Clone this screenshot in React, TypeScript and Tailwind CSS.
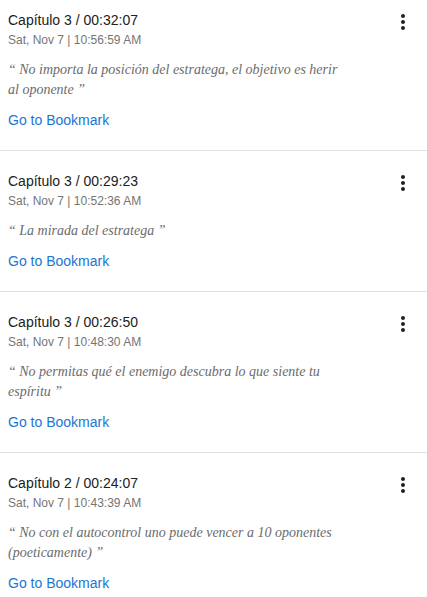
import React from "react";

type Item = { title: string; date: string; quote: string };

const items: Item[] = [
  {
    title: "Capítulo 3 / 00:32:07",
    date: "Sat, Nov 7 | 10:56:59 AM",
    quote: "“ No importa la posición del estratega, el objetivo es herir al oponente ”",
  },
  {
    title: "Capítulo 3 / 00:29:23",
    date: "Sat, Nov 7 | 10:52:36 AM",
    quote: "“ La mirada del estratega ”",
  },
  {
    title: "Capítulo 3 / 00:26:50",
    date: "Sat, Nov 7 | 10:48:30 AM",
    quote: "“ No permitas qué el enemigo descubra lo que siente tu espíritu ”",
  },
  {
    title: "Capítulo 2 / 00:24:07",
    date: "Sat, Nov 7 | 10:43:39 AM",
    quote: "“ No con el autocontrol uno puede vencer a 10 oponentes (poeticamente) ”",
  },
];

function MoreVert() {
  return (
    <svg width="24" height="24" viewBox="0 0 24 24" fill="#212121">
      <path d="M12 8c1.1 0 2-.9 2-2s-.9-2-2-2-2 .9-2 2 .9 2 2 2zm0 2c-1.1 0-2 .9-2 2s.9 2 2 2 2-.9 2-2-.9-2-2-2zm0 6c-1.1 0-2 .9-2 2s.9 2 2 2 2-.9 2-2-.9-2-2-2z" />
    </svg>
  );
}

export default function App() {
  return (
    <div className="w-[427px] h-[597px] overflow-hidden bg-white" style={{ fontFamily: '"Liberation Sans", Arial, sans-serif' }}>
      {items.map((it, i) => (
        <div
          key={i}
          className={`flex pl-2 pr-3 pb-5 border-b border-[#e0e0e0] ${i === 0 ? "pt-[10px]" : "pt-5"}`}
        >
          <div className="flex-1 min-w-0">
            <div className="text-[14px] leading-5 text-[#212121]">{it.title}</div>
            <div className="text-[12px] leading-5 text-[#757575]">{it.date}</div>
            <div
              className="mt-[10px] pr-[46px] text-[14px] leading-5 italic text-[#6b6b6b]"
              style={{ fontFamily: '"Liberation Serif", "Times New Roman", serif' }}
            >
              {it.quote}
            </div>
            <div className="mt-[10px] text-[14px] leading-5 text-[#1976d2]">Go to Bookmark</div>
          </div>
          <div className="w-6 h-6 shrink-0">
            <MoreVert />
          </div>
        </div>
      ))}
    </div>
  );
}
